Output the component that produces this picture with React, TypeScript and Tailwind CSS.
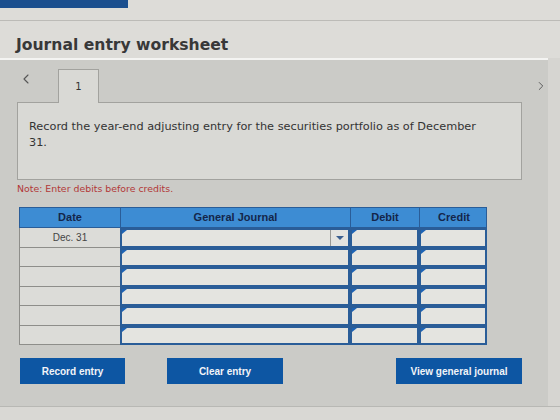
import { ChevronLeft, ChevronRight } from 'lucide-react';

const rows = ['Dec. 31', '', '', '', '', ''];

// small blue flag in the corner of an editable cell
function Flag() {
  return (
    <span className="absolute left-0 top-0 h-0 w-0 border-l-[5px] border-b-[4px] border-l-[#1d63b5] border-b-transparent" />
  );
}

function InputCell({ dropdown = false }: { dropdown?: boolean }) {
  return (
    <div className="relative h-full border-2 border-[#2a5d98] bg-[#e4e4e0]">
      <Flag />
      {dropdown && (
        <div className="absolute right-0 top-0 flex h-full w-[18px] items-center justify-center border-l border-[#9a9a96]">
          <span className="h-0 w-0 border-x-[4px] border-t-[4px] border-x-transparent border-t-[#3b5f8f]" />
        </div>
      )}
    </div>
  );
}

export default function App() {
  return (
    <div className="flex h-[420px] w-[560px] flex-col overflow-hidden bg-[#dddcd8] font-['DejaVu_Sans',sans-serif]">
      {/* header */}
      <div className="h-[8px] w-[128px] bg-[#1b4f8e]" />
      <div className="mt-[12px] h-px bg-[#bcbbb7]" />
      <h1 className="pl-[16px] pt-[14px] text-[15.6px] font-bold leading-[20px] text-[#383838]">
        Journal entry worksheet
      </h1>

      <div className="mt-[3px] flex">
        {/* worksheet panel */}
        <div className="h-[348px] w-[548px] border-t-2 border-[#f4f4f2] bg-[#cbcbc7] pl-[17px]">
          <div className="flex h-[42px] items-end">
            <div className="flex h-full w-[41px] items-center pb-[4px] pl-[1px]">
              <ChevronLeft className="h-[16px] w-[16px] text-[#555]" strokeWidth={1.6} />
            </div>
            <div className="relative top-px flex h-[34px] w-[41px] items-center justify-center border border-b-0 border-[#a2a29e] bg-[#d9d9d5] text-[10px] text-[#333]">
              1
            </div>
            <div className="flex h-full flex-1 items-center justify-end pt-[10px]">
              <ChevronRight className="h-[14px] w-[14px] text-[#555]" strokeWidth={1.6} />
            </div>
          </div>

          <div className="h-[78px] w-[505px] border border-[#a2a29e] bg-[#d9d9d5] px-[11px] pt-[16px] text-[11.3px] leading-[16px] text-[#333]">
            <p className="w-[460px]">
              Record the year-end adjusting entry for the securities portfolio as of December 31.
            </p>
          </div>

          <p className="pt-[2px] text-[9.4px] leading-[14px] text-[#b23838]">
            Note: Enter debits before credits.
          </p>

          {/* journal grid */}
          <div className="ml-[2px] mt-[11px] w-[468px] font-['Liberation_Sans',sans-serif]">
            <div className="grid h-[21px] grid-cols-[101px_230px_69px_68px] border border-[#2a5d98] bg-[#3d8cd3] text-[11px] font-bold text-[#14264a]">
              <div className="flex items-center justify-center border-r border-[#2a5d98]">Date</div>
              <div className="flex items-center justify-center border-r border-[#2a5d98]">General Journal</div>
              <div className="flex items-center justify-center border-r border-[#2a5d98]">Debit</div>
              <div className="flex items-center justify-center">Credit</div>
            </div>
            {rows.map((d, i) => (
              <div key={i} className="grid h-[19.5px] grid-cols-[101px_230px_69px_68px]">
                <div className="flex items-center justify-center border-b border-l border-[#8e8e8a] bg-[#dcdcd8] text-[10px] text-[#444]">
                  {d}
                </div>
                <InputCell dropdown={i === 0} />
                <InputCell />
                <InputCell />
              </div>
            ))}
          </div>

          <div className="mt-[13px] flex w-[505px] items-center font-['Liberation_Sans',sans-serif] text-[10px] font-bold text-[#f2f4f8]">
            <button className="ml-[3px] h-[26px] w-[105px] bg-[#0d56a3]">Record entry</button>
            <button className="ml-[42px] h-[26px] w-[116px] bg-[#0d56a3]">Clear entry</button>
            <button className="ml-auto h-[26px] w-[126px] bg-[#0d56a3]">View general journal</button>
          </div>
        </div>
        <div className="flex-1 bg-[#d6d5d1]" />
      </div>
      <div className="flex-1 border-t border-[#b8b8b4] bg-[#d9d8d4]" />
    </div>
  );
}
